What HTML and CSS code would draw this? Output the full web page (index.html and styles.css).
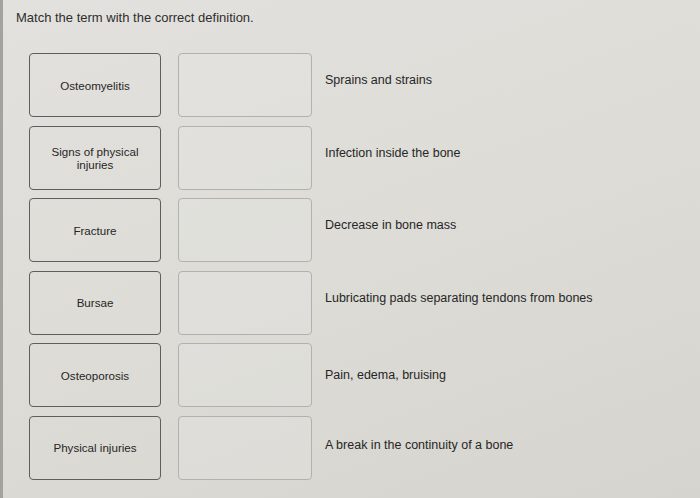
FILE: index.html
```html
<!DOCTYPE html>
<html>
<head>
<meta charset="utf-8">
<link rel="stylesheet" href="styles.css">
</head>
<body>
<div class="page">
  <p class="title">Match the term with the correct definition.</p>
  <div class="rows">
    <div class="term">Osteomyelitis</div>
    <div class="slot"></div>
    <div class="def">Sprains and strains</div>

    <div class="term">Signs of physical<br>injuries</div>
    <div class="slot"></div>
    <div class="def">Infection inside the bone</div>

    <div class="term">Fracture</div>
    <div class="slot"></div>
    <div class="def">Decrease in bone mass</div>

    <div class="term">Bursae</div>
    <div class="slot"></div>
    <div class="def">Lubricating pads separating tendons from bones</div>

    <div class="term">Osteoporosis</div>
    <div class="slot"></div>
    <div class="def def-low">Pain, edema, bruising</div>

    <div class="term">Physical injuries</div>
    <div class="slot"></div>
    <div class="def def-mid">A break in the continuity of a bone</div>
  </div>
</div>
</body>
</html>
```

FILE: styles.css
```css
html, body {
  margin: 0;
  padding: 0;
}
body {
  width: 700px;
  height: 498px;
  overflow: hidden;
  background: linear-gradient(160deg, #e2e1dd 0%, #dddcd7 50%, #d6d4ce 100%);
  font-family: "Liberation Sans", Arial, sans-serif;
  color: #2f2f2f;
}
.page {
  height: 498px;
  box-sizing: border-box;
  border-left: 3px solid #a3a29e;
  padding: 10px 0 0 13px;
}
.title {
  margin: 0;
  font-size: 13px;
  line-height: 16px;
  color: #2e2e2e;
}
.rows {
  display: grid;
  grid-template-columns: 132px 151px 1fr;
  grid-auto-rows: 64px;
  row-gap: 8.6px;
  margin: 27px 0 0 13px;
}
.term {
  border: 1px solid #5e5e5e;
  border-radius: 4px;
  display: flex;
  align-items: center;
  justify-content: center;
  text-align: center;
  font-size: 11.6px;
  line-height: 13px;
  color: #262626;
}
.slot {
  margin-left: 17px;
  border: 1px solid #b3b1ad;
  border-radius: 4px;
  background: rgba(230, 229, 226, 0.35);
}
.def {
  font-size: 12.5px;
  line-height: 16px;
  padding: 19px 0 0 13px;
  color: #262626;
}
.def-low {
  padding-top: 24px;
}
.def-mid {
  padding-top: 21px;
}
```
